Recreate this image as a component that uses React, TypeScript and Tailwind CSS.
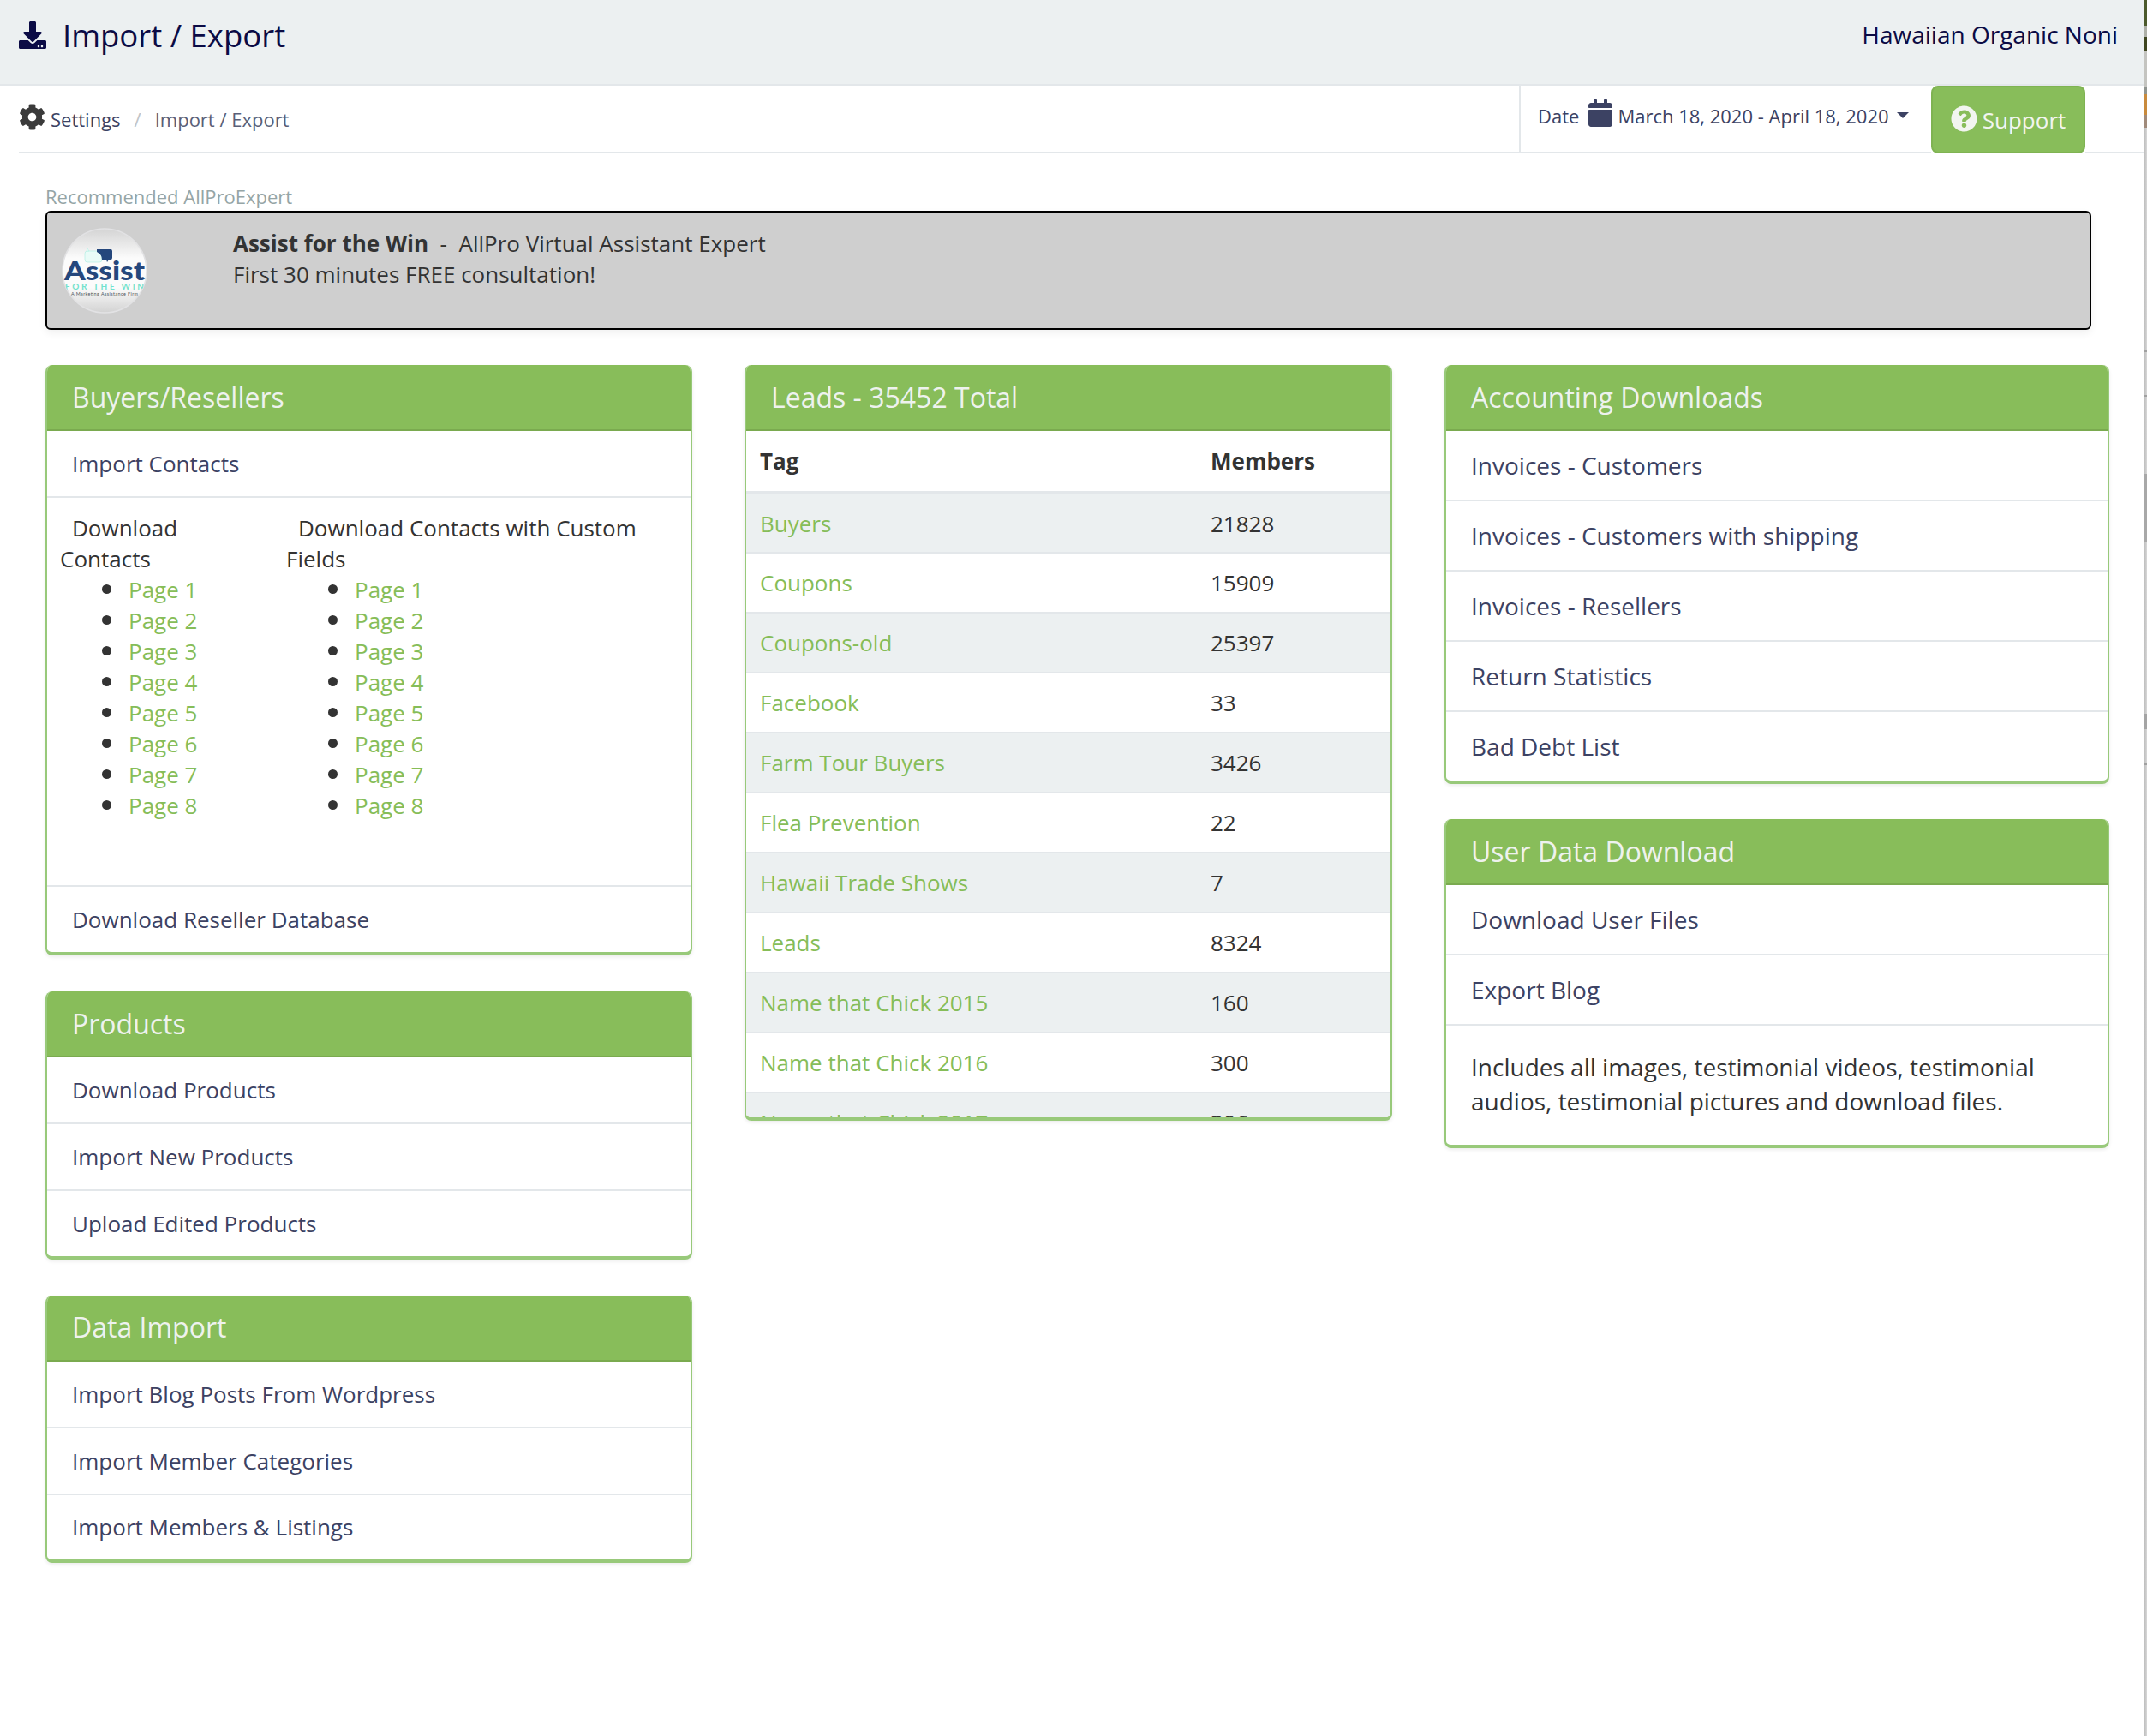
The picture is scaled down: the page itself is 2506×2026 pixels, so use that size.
import React from "react";
import { FaDownload, FaCog, FaCalendar, FaQuestionCircle } from "react-icons/fa";

function Card({ title, children, className = "" }: { title: string; children: React.ReactNode; className?: string }) {
  return (
    <section className={`flex flex-col overflow-hidden rounded-lg border-x-2 border-b-4 border-x-[#98c97a] border-b-[#98c97a] bg-white shadow-[0_2px_4px_rgba(0,0,0,0.08)] ${className}`}>
      <h2 className="flex h-[77px] shrink-0 items-center border-b-2 border-[#7aaa4f] bg-[#88bd5a] pl-[29px] text-[32px] font-normal text-[#eef2ee]">{title}</h2>
      {children}
    </section>
  );
}

function Row({ children, h = "h-[78px] last:h-[75.5px]", size = "text-[26px]" }: { children: React.ReactNode; h?: string; size?: string }) {
  return (
    <div className={`flex ${h} items-center border-b-2 border-[#e3e7ea] pl-[29px] ${size} text-[#3c4263] last:border-b-0`}>{children}</div>
  );
}

function Pages({ title, className }: { title: string; className: string }) {
  return (
    <div className={className}>
      <p className="indent-[14px]">{title}</p>
      <ul className="pl-[80px]">
        {[1, 2, 3, 4, 5, 6, 7, 8].map((n) => (
          <li key={n} className="relative before:absolute before:left-[-31px] before:top-[12px] before:h-[11px] before:w-[11px] before:rounded-full before:bg-[#333]">
            <a className="text-[#86bd58]">Page {n}</a>
          </li>
        ))}
      </ul>
    </div>
  );
}

const leads: [string, string][] = [
  ["Buyers", "21828"],
  ["Coupons", "15909"],
  ["Coupons-old", "25397"],
  ["Facebook", "33"],
  ["Farm Tour Buyers", "3426"],
  ["Flea Prevention", "22"],
  ["Hawaii Trade Shows", "7"],
  ["Leads", "8324"],
  ["Name that Chick 2015", "160"],
  ["Name that Chick 2016", "300"],
  ["Name that Chick 2017", "306"],
];

function Logo() {
  return (
    <svg viewBox="0 0 100 100" className="h-[100px] w-[100px] shrink-0">
      <defs>
        <linearGradient id="lg" x1="0" y1="0" x2="0" y2="1">
          <stop offset="0" stopColor="#d4d4d4" />
          <stop offset="0.35" stopColor="#fbfbfb" />
          <stop offset="0.7" stopColor="#fbfbfb" />
          <stop offset="1" stopColor="#d2d2d2" />
        </linearGradient>
        <clipPath id="lc">
          <circle cx="50" cy="50" r="49" />
        </clipPath>
      </defs>
      <circle cx="50" cy="50" r="49" fill="url(#lg)" stroke="#e2e2e4" strokeWidth="1.5" />
      <g clipPath="url(#lc)">
        <rect x="27" y="27" width="20" height="13" rx="3" fill="#e9fbf7" stroke="#a9ece0" strokeWidth="0.6" />
        <path d="M29 27 L30 24 L32 27 Z" fill="#e9fbf7" stroke="#a9ece0" strokeWidth="0.5" />
        <path d="M41 25 H57 Q59 25 59 27 V35 Q59 37 57 37 H55 L53 40 L52 37 H47 Q47 31 41 28 Z" fill="#25477c" />
        <text x="3" y="61" fontFamily="Lato, sans-serif" fontWeight="900" fontSize="31" fill="#25477c" textLength="94" lengthAdjust="spacingAndGlyphs">Assist</text>
        <text x="4" y="71.5" fontFamily="Lato, sans-serif" fontWeight="700" fontSize="10" fill="#72e2cd" textLength="92">FOR THE WIN</text>
        <text x="11" y="79" fontFamily="Lato, sans-serif" fontSize="5.4" fill="#4c5560" textLength="78">A Marketing Assistance Firm</text>
      </g>
    </svg>
  );
}

function EdgeStrip() {
  return (
    <aside className="flex w-[4px] shrink-0 flex-col bg-gradient-to-r from-[#b4b4b4] to-[#d8d8d8]">
      <div className="h-[30px] bg-[#4c5a2c]" />
      <div className="h-[13px] bg-[#aeb0a8]" />
      <div className="h-[17px] bg-[#3f4620]" />
      <div className="h-[42px] bg-[#c4c4c0]" />
      <div className="h-[8px] bg-[#8f9490]" />
      <div className="h-[24px] bg-[#c98a3c]" />
      <div className="h-[15px] bg-[#a08a7a]" />
      <div className="h-[260px]" />
      <div className="h-[2px] bg-[#a0a0a0]" />
      <div className="h-[50px]" />
      <div className="h-[2px] bg-[#a0a0a0]" />
      <div className="h-[90px]" />
      <div className="h-[80px] bg-[#a8a8a8]" />
      <div className="h-[200px]" />
      <div className="h-[18px] bg-[#a4a4a4]" />
      <div className="h-[40px]" />
      <div className="h-[2px] bg-[#a0a0a0]" />
    </aside>
  );
}

export default function App() {
  return (
    <div className="flex h-[2026px] w-[2506px] overflow-hidden bg-white font-['Open_Sans',sans-serif] text-[26px] leading-[36px] text-[#333]">
      <main className="min-w-0 flex-1">
        <header className="flex h-[100px] items-start justify-between border-b-2 border-[#e3e7ea] bg-[#ecf0f1] pl-[22px] pr-[30px] text-[#0b0b45]">
          <div className="mt-[20px] flex items-center gap-[19px]">
            <FaDownload className="h-[32px] w-[32px] text-[#0b0b45]" />
            <h1 className="text-[36.5px] leading-[42px] font-normal">Import / Export</h1>
          </div>
          <div className="mt-[20px] text-[28px] leading-[40px]">Hawaiian Organic Noni</div>
        </header>

        <div className="flex h-[79px] items-stretch justify-between pl-[22px]">
          <nav className="flex flex-1 items-center border-b-2 border-[#e3e7ea] text-[22px] text-[#3c4263]">
            <FaCog className="mb-[5px] mr-[6px] h-[31px] w-[31px] text-[#3a3a3a]" />
            <span>Settings</span>
            <span className="mx-[16px] text-[#c0c4c8]">/</span>
            <span className="text-[#5a5f78]">Import / Export</span>
          </nav>
          <div className="flex w-[481px] items-center whitespace-nowrap border-b-2 border-l-2 border-[#e3e7ea] pb-[8px] pl-[20px] text-[22px] text-[#3c4263]">
            <span>Date</span>
            <FaCalendar className="mb-[6px] ml-[11px] mr-[6px] h-[32px] w-[28px] text-[#3c4263]" />
            <span>March 18, 2020 - April 18, 2020</span>
            <span className="ml-[9px] h-0 w-0 border-x-[7.5px] border-t-[7.5px] border-x-transparent border-t-[#3c4263]" />
          </div>
          <button className="flex w-[180px] items-center justify-center gap-[6px] rounded-lg border-2 border-[#7fb352] bg-[#88bd5a] text-[26px] text-[#f2f5f0]">
            <FaQuestionCircle className="mb-[3px] h-[31px] w-[31px]" />
            <span>Support</span>
          </button>
          <div className="w-[68px] border-b-2 border-[#e3e7ea]" />
        </div>

        <div className="pl-[53px] pt-[33px]">
          <div className="text-[22px] leading-[34px] text-[#95a5a6]">Recommended AllProExpert</div>
          <div className="flex h-[139px] w-[2388px] items-start rounded-md border-2 border-black bg-[#cfcfcf] pl-[17px] pt-[18px] shadow-[0_4px_10px_rgba(0,0,0,0.06)]">
            <Logo />
            <div className="ml-[100px] text-[26px] leading-[36px] text-[#333]">
              <p>
                <strong className="font-bold">Assist for the Win</strong>&nbsp; - &nbsp;AllPro Virtual Assistant Expert
              </p>
              <p>First 30 minutes FREE consultation!</p>
            </div>
          </div>

          <div className="mt-[41px] grid grid-cols-[755px_756px_776px] items-start gap-x-[61px]">
            <div className="flex flex-col gap-[42px]">
              <Card title="Buyers/Resellers">
                <Row h="h-[78px]">Import Contacts</Row>
                <div className="flex h-[454px] border-b-2 border-[#e3e7ea] pl-[15px] pt-[16.5px]">
                  <Pages title="Download Contacts" className="w-[264px] pr-[30px]" />
                  <Pages title="Download Contacts with Custom Fields" className="w-[460px]" />
                </div>
                <Row h="h-[76px]">Download Reseller Database</Row>
              </Card>
              <Card title="Products">
                <Row>Download Products</Row>
                <Row>Import New Products</Row>
                <Row>Upload Edited Products</Row>
              </Card>
              <Card title="Data Import">
                <Row>Import Blog Posts From Wordpress</Row>
                <Row>Import Member Categories</Row>
                <Row>Import Members &amp; Listings</Row>
              </Card>
            </div>

            <Card title="Leads - 35452 Total" className="h-[882px]">
              <div className="min-h-0 flex-1 overflow-hidden pr-px">
                <table className="w-full table-fixed border-collapse text-[26px]">
                  <thead>
                    <tr className="h-[72px] border-b-4 border-[#e3e7ea] text-left font-bold">
                      <th className="w-[542px] pl-[16px]">Tag</th>
                      <th>Members</th>
                    </tr>
                  </thead>
                  <tbody>
                    {leads.map(([tag, n], i) => (
                      <tr key={tag} className={`h-[70px] border-b-2 border-[#e3e7ea] ${i % 2 === 0 ? "bg-[#ecf0f1]" : "bg-white"}`}>
                        <td className="pl-[16px] text-[#86bd58]">{tag}</td>
                        <td>{n}</td>
                      </tr>
                    ))}
                  </tbody>
                </table>
              </div>
            </Card>

            <div className="flex flex-col gap-[41px]">
              <Card title="Accounting Downloads">
                {["Invoices - Customers", "Invoices - Customers with shipping", "Invoices - Resellers", "Return Statistics", "Bad Debt List"].map((t) => (
                  <Row key={t} h="h-[82px] last:h-[80px]" size="text-[28px]">{t}</Row>
                ))}
              </Card>
              <Card title="User Data Download">
                <Row h="h-[82px]" size="text-[28px]">Download User Files</Row>
                <Row h="h-[82px]" size="text-[28px]">Export Blog</Row>
                <div className="h-[138.5px] pl-[29px] pt-[28px] text-[28px] leading-[40px] text-[#333]">
                  Includes all images, testimonial videos, testimonial audios, testimonial pictures and download files.
                </div>
              </Card>
            </div>
          </div>
        </div>
      </main>
      <EdgeStrip />
    </div>
  );
}
